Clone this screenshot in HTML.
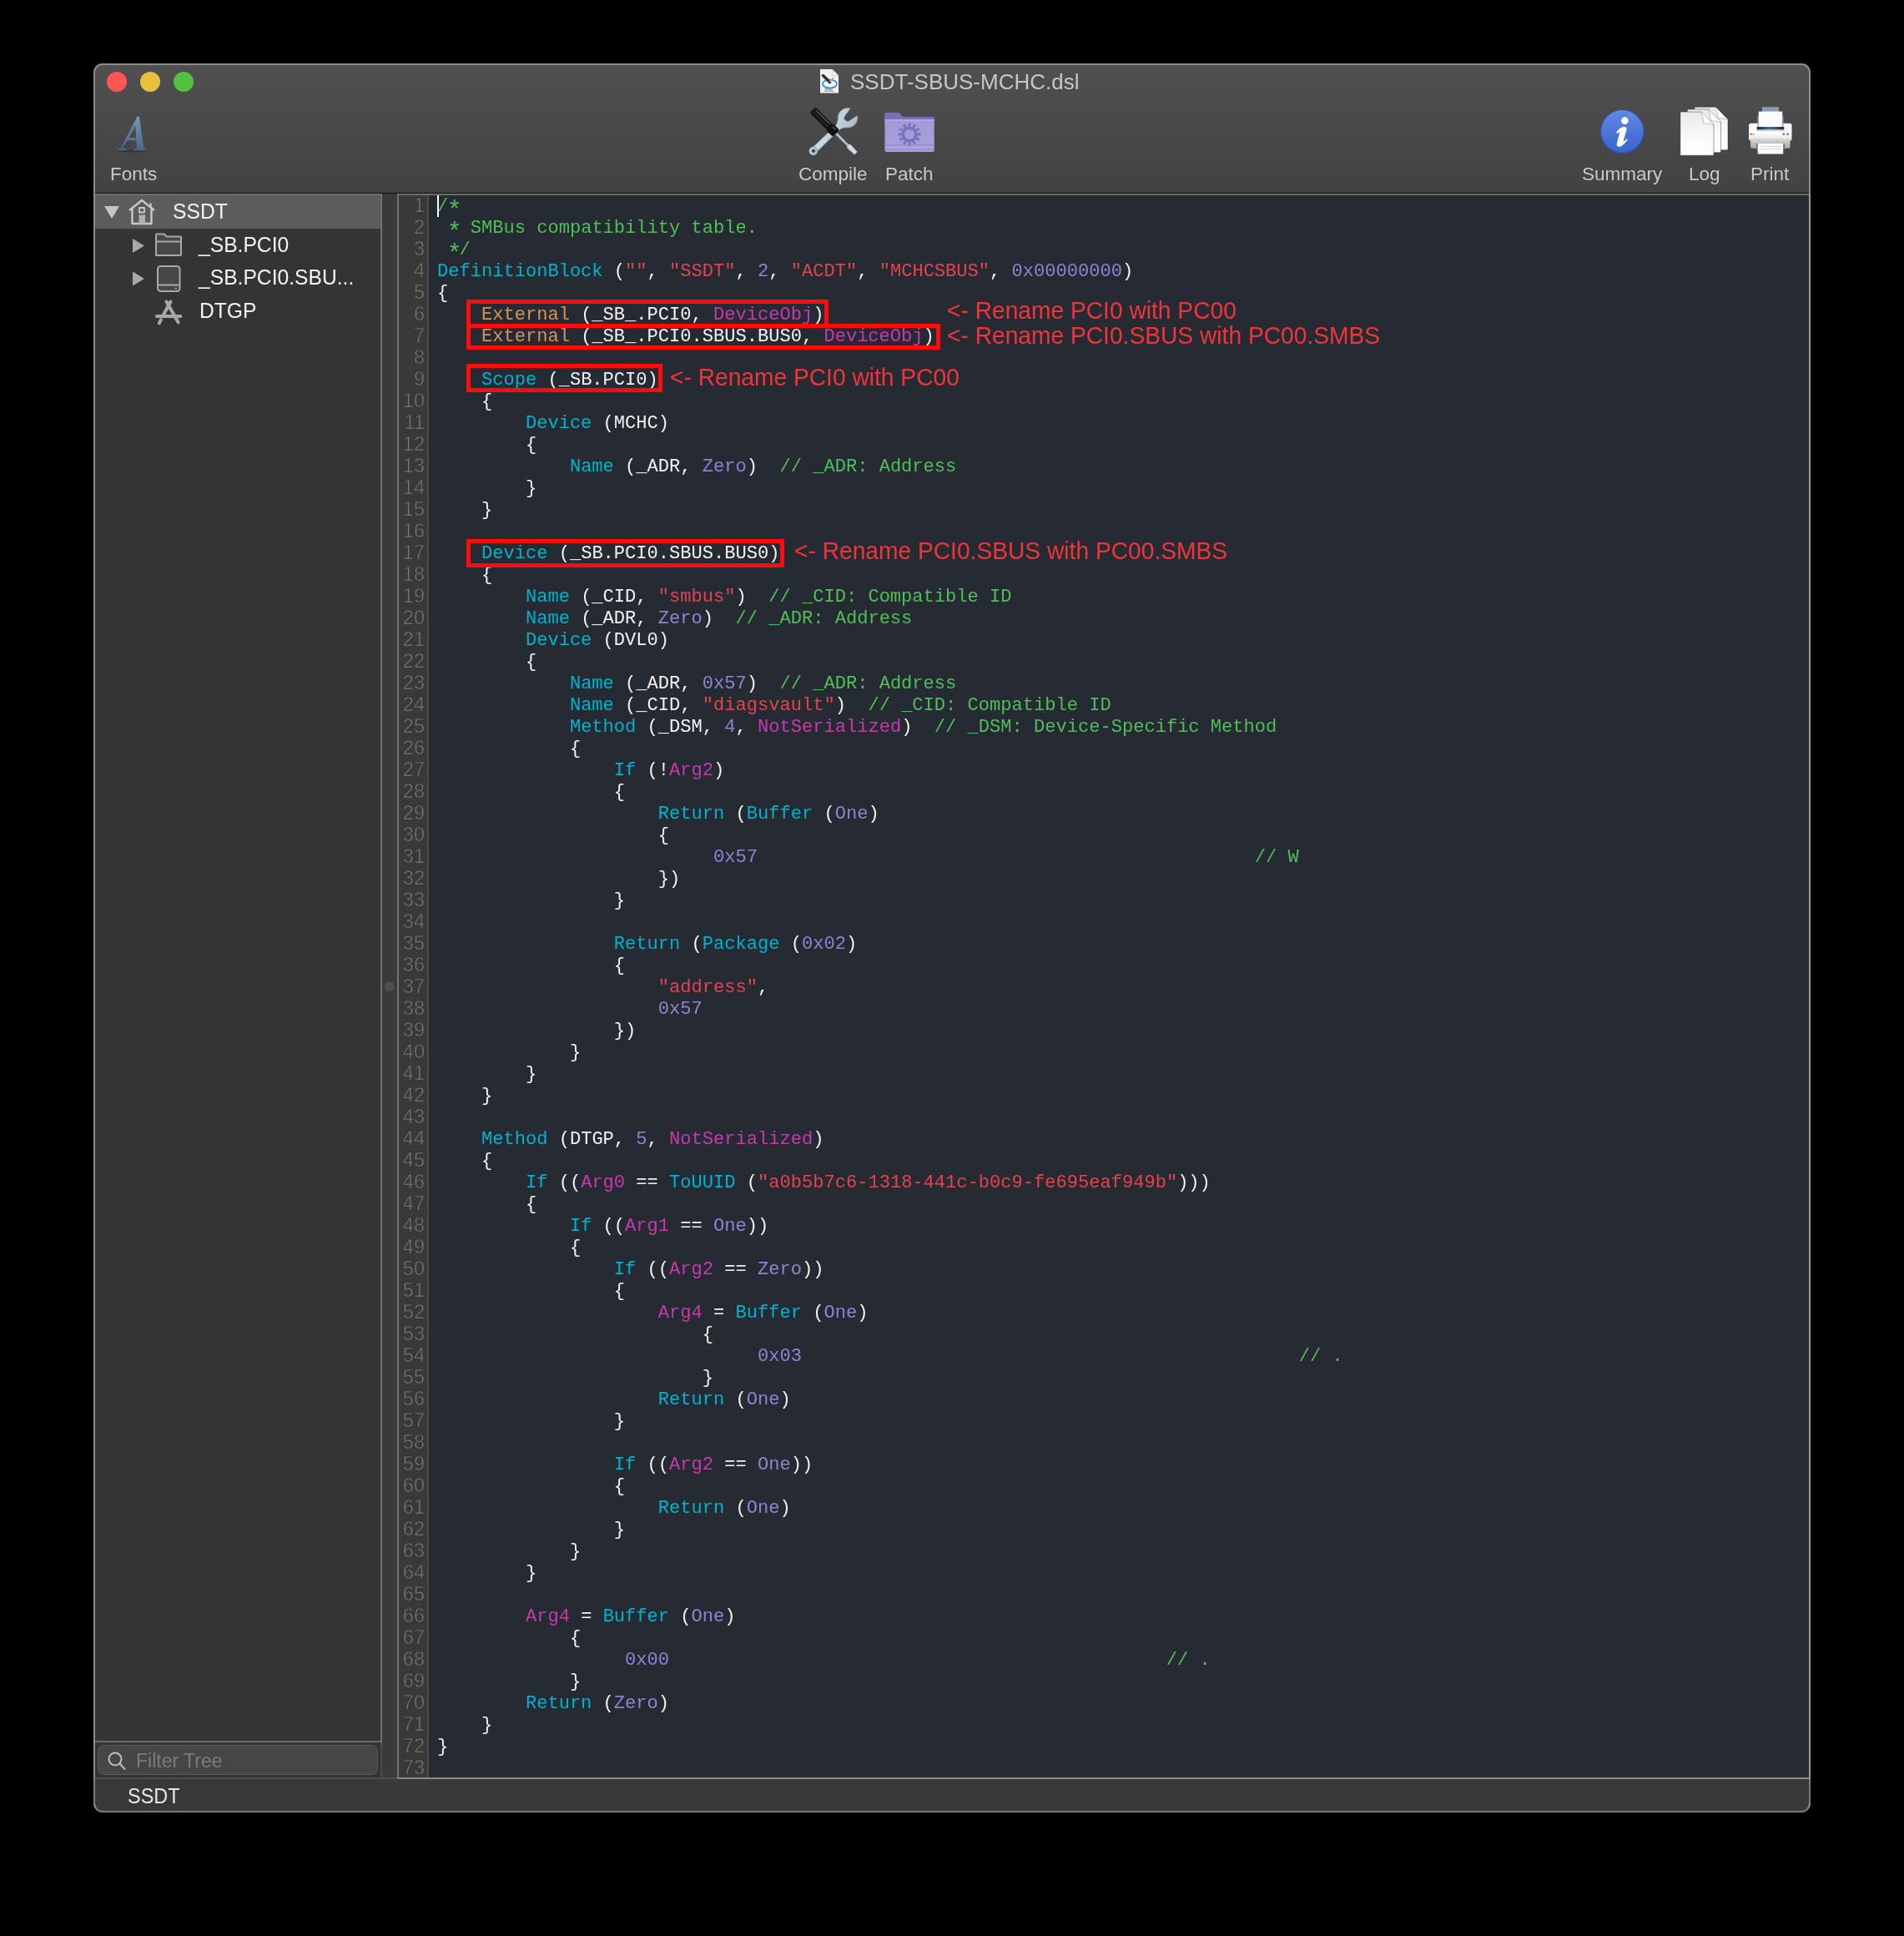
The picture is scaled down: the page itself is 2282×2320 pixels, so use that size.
<!DOCTYPE html>
<html><head><meta charset="utf-8">
<style>
*{margin:0;padding:0;box-sizing:border-box}
html,body{width:2282px;height:2320px;background:#000;overflow:hidden}
body{position:relative;font-family:"Liberation Sans",sans-serif;-webkit-font-smoothing:antialiased}
#root{position:absolute;left:0;top:0;width:2282px;height:2320px;will-change:transform}
.abs{position:absolute}
#win{position:absolute;left:112px;top:76px;width:2058px;height:2096px;border-radius:11px;background:#393939;overflow:hidden}
#winborder{position:absolute;left:112px;top:76px;width:2058px;height:2096px;border-radius:11px;border:2px solid #8c8c8c;border-bottom-color:#7a7a7a;pointer-events:none}
#toolbar{position:absolute;left:0;top:0;width:2058px;height:155px;background:linear-gradient(#4f504f,#414241)}
#tbline{position:absolute;left:0;top:155px;width:2058px;height:1px;background:#111}
.tl{position:absolute;width:24px;height:24px;border-radius:50%;top:86px}
.tlab{position:absolute;top:194px;font-size:22.5px;color:#c9c9c9;white-space:nowrap;line-height:30px}
#title{position:absolute;left:1019px;top:81px;font-size:26px;color:#c6c6c6;white-space:nowrap;line-height:34px}
#sidebar{position:absolute;left:114px;top:232px;width:344px;height:1900px;background:#343434;border-top:2px solid #6d6d6d;border-right:2px solid #4a4a4a}
#sbr{position:absolute;left:456px;top:232px;width:2px;height:1856px;background:#727272}
#splitter{position:absolute;left:458px;top:232px;width:18px;height:1900px;background:#3a3a3a}
#editor{position:absolute;left:476px;top:232px;width:1694px;height:1900px;background:#262a33;border-left:2px solid #727272;border-top:2px solid #6d6d6d;border-right:2px solid #979797;border-bottom:2px solid #8a8a8a}
#gutter{position:absolute;left:478px;top:234px;width:34px;height:1896px;background:#393939}
#gsep{position:absolute;left:512px;top:234px;width:2px;height:1896px;background:#4b4b4b}
#nums{position:absolute;left:478px;top:233px;width:31px;text-align:right;font-size:23.5px;line-height:26px;color:#7c7c7c;-webkit-text-stroke:0.75px #393939}
#nums div{height:26px}
#code{position:absolute;left:524px;top:235px;font-family:"Liberation Mono",monospace;font-size:22.07px;line-height:26px;color:#f2f2f2;white-space:pre}
#code .l{height:26px}
.ast{display:inline-block;transform:translate(1px,6px) scale(1.35)}
.c{color:#4fbf58}.k{color:#00b3cf}.s{color:#e5434d}.n{color:#8c85d2}.m{color:#c63aae}.e{color:#d6935e}
#caret{position:absolute;left:524px;top:234px;width:2px;height:26px;background:#fff}
.box{position:absolute;border:5px solid #fe0b0b}
.ann{position:absolute;color:#f0353a;font-size:29.5px;white-space:nowrap;line-height:36px;transform:scaleX(0.955);transform-origin:0 0}
#status{position:absolute;left:114px;top:2132px;width:2054px;height:38px;background:#393939;border-radius:0 0 9px 9px}
#sbline{position:absolute;left:114px;top:2130px;width:362px;height:2px;background:#4e4e4e}
.srow{position:absolute;left:114px;width:342px;height:40px}
.stext{position:absolute;font-size:26.5px;color:#f2f2f2;white-space:nowrap;line-height:34px;transform:scaleX(0.93);transform-origin:0 0}
#filter{position:absolute;left:117px;top:2091px;width:336px;height:36px;border-radius:8px;background:#464646;border:1px solid #5a5a5a}
</style></head><body><div id="root">
<div id="win"></div>
<div class="abs" style="left:112px;top:76px;width:2058px;height:156px;border-radius:11px 11px 0 0;overflow:hidden">
 <div id="toolbar"></div><div id="tbline"></div>
</div>
<div class="tl" style="left:128px;background:#fe5652"></div>
<div class="tl" style="left:168px;background:#e7c03e"></div>
<div class="tl" style="left:208px;background:#51c13e"></div>
<div id="title">SSDT-SBUS-MCHC.dsl</div>
<div class="tlab" style="left:132px">Fonts</div>
<div class="tlab" style="left:957px">Compile</div>
<div class="tlab" style="left:1061px">Patch</div>
<div class="tlab" style="left:1896px">Summary</div>
<div class="tlab" style="left:2024px">Log</div>
<div class="tlab" style="left:2098px">Print</div>

<div id="sidebar"></div><div id="sbr"></div>
<div class="srow" style="top:234px;background:#5c5c5c"></div>
<div class="stext" style="left:207px;top:236px">SSDT</div>
<div class="stext" style="left:238px;top:276px">_SB.PCI0</div>
<div class="stext" style="left:238px;top:315px">_SB.PCI0.SBU...</div>
<div class="stext" style="left:239px;top:355px">DTGP</div>
<div id="filter"></div>
<div class="abs" style="left:114px;top:2086px;width:342px;height:2px;background:#6a6a6a"></div>
<div class="abs" style="left:163px;top:2094px;font-size:23px;color:#7b7b7b;line-height:32px">Filter Tree</div>
<div id="splitter"></div>
<div class="abs" style="left:461px;top:1176px;width:12px;height:12px;border-radius:50%;background:#4f4f4f"></div>
<div id="editor"></div>
<div id="gutter"></div><div id="gsep"></div>
<div id="nums"><div>1</div><div>2</div><div>3</div><div>4</div><div>5</div><div>6</div><div>7</div><div>8</div><div>9</div><div>10</div><div>11</div><div>12</div><div>13</div><div>14</div><div>15</div><div>16</div><div>17</div><div>18</div><div>19</div><div>20</div><div>21</div><div>22</div><div>23</div><div>24</div><div>25</div><div>26</div><div>27</div><div>28</div><div>29</div><div>30</div><div>31</div><div>32</div><div>33</div><div>34</div><div>35</div><div>36</div><div>37</div><div>38</div><div>39</div><div>40</div><div>41</div><div>42</div><div>43</div><div>44</div><div>45</div><div>46</div><div>47</div><div>48</div><div>49</div><div>50</div><div>51</div><div>52</div><div>53</div><div>54</div><div>55</div><div>56</div><div>57</div><div>58</div><div>59</div><div>60</div><div>61</div><div>62</div><div>63</div><div>64</div><div>65</div><div>66</div><div>67</div><div>68</div><div>69</div><div>70</div><div>71</div><div>72</div><div>73</div></div>
<div id="code"><div class="l"><span class="c">/<span class="ast">*</span></span></div><div class="l"><span class="c"> <span class="ast">*</span> SMBus compatibility table.</span></div><div class="l"><span class="c"> <span class="ast">*</span>/</span></div><div class="l"><span class="k">DefinitionBlock</span> (<span class="s">&quot;&quot;</span>, <span class="s">&quot;SSDT&quot;</span>, <span class="n">2</span>, <span class="s">&quot;ACDT&quot;</span>, <span class="s">&quot;MCHCSBUS&quot;</span>, <span class="n">0x00000000</span>)</div><div class="l">{</div><div class="l">    <span class="e">External</span> (_SB_.PCI0, <span class="m">DeviceObj</span>)</div><div class="l">    <span class="e">External</span> (_SB_.PCI0.SBUS.BUS0, <span class="m">DeviceObj</span>)</div><div class="l">&#8203;</div><div class="l">    <span class="k">Scope</span> (_SB.PCI0)</div><div class="l">    {</div><div class="l">        <span class="k">Device</span> (MCHC)</div><div class="l">        {</div><div class="l">            <span class="k">Name</span> (_ADR, <span class="n">Zero</span>)  <span class="c">// _ADR: Address</span></div><div class="l">        }</div><div class="l">    }</div><div class="l">&#8203;</div><div class="l">    <span class="k">Device</span> (_SB.PCI0.SBUS.BUS0)</div><div class="l">    {</div><div class="l">        <span class="k">Name</span> (_CID, <span class="s">&quot;smbus&quot;</span>)  <span class="c">// _CID: Compatible ID</span></div><div class="l">        <span class="k">Name</span> (_ADR, <span class="n">Zero</span>)  <span class="c">// _ADR: Address</span></div><div class="l">        <span class="k">Device</span> (DVL0)</div><div class="l">        {</div><div class="l">            <span class="k">Name</span> (_ADR, <span class="n">0x57</span>)  <span class="c">// _ADR: Address</span></div><div class="l">            <span class="k">Name</span> (_CID, <span class="s">&quot;diagsvault&quot;</span>)  <span class="c">// _CID: Compatible ID</span></div><div class="l">            <span class="k">Method</span> (_DSM, <span class="n">4</span>, <span class="m">NotSerialized</span>)  <span class="c">// _DSM: Device-Specific Method</span></div><div class="l">            {</div><div class="l">                <span class="k">If</span> (!<span class="m">Arg2</span>)</div><div class="l">                {</div><div class="l">                    <span class="k">Return</span> (<span class="k">Buffer</span> (<span class="n">One</span>)</div><div class="l">                    {</div><div class="l">                         <span class="n">0x57</span>                                             <span class="c">// W</span></div><div class="l">                    })</div><div class="l">                }</div><div class="l">&#8203;</div><div class="l">                <span class="k">Return</span> (<span class="k">Package</span> (<span class="n">0x02</span>)</div><div class="l">                {</div><div class="l">                    <span class="s">&quot;address&quot;</span>,</div><div class="l">                    <span class="n">0x57</span></div><div class="l">                })</div><div class="l">            }</div><div class="l">        }</div><div class="l">    }</div><div class="l">&#8203;</div><div class="l">    <span class="k">Method</span> (DTGP, <span class="n">5</span>, <span class="m">NotSerialized</span>)</div><div class="l">    {</div><div class="l">        <span class="k">If</span> ((<span class="m">Arg0</span> == <span class="k">ToUUID</span> (<span class="s">&quot;a0b5b7c6-1318-441c-b0c9-fe695eaf949b&quot;</span>)))</div><div class="l">        {</div><div class="l">            <span class="k">If</span> ((<span class="m">Arg1</span> == <span class="n">One</span>))</div><div class="l">            {</div><div class="l">                <span class="k">If</span> ((<span class="m">Arg2</span> == <span class="n">Zero</span>))</div><div class="l">                {</div><div class="l">                    <span class="m">Arg4</span> = <span class="k">Buffer</span> (<span class="n">One</span>)</div><div class="l">                        {</div><div class="l">                             <span class="n">0x03</span>                                             <span class="c">// .</span></div><div class="l">                        }</div><div class="l">                    <span class="k">Return</span> (<span class="n">One</span>)</div><div class="l">                }</div><div class="l">&#8203;</div><div class="l">                <span class="k">If</span> ((<span class="m">Arg2</span> == <span class="n">One</span>))</div><div class="l">                {</div><div class="l">                    <span class="k">Return</span> (<span class="n">One</span>)</div><div class="l">                }</div><div class="l">            }</div><div class="l">        }</div><div class="l">&#8203;</div><div class="l">        <span class="m">Arg4</span> = <span class="k">Buffer</span> (<span class="n">One</span>)</div><div class="l">            {</div><div class="l">                 <span class="n">0x00</span>                                             <span class="c">// .</span></div><div class="l">            }</div><div class="l">        <span class="k">Return</span> (<span class="n">Zero</span>)</div><div class="l">    }</div><div class="l">}</div><div class="l">&#8203;</div></div>
<div id="caret"></div>

<div class="box" style="left:559px;top:359px;width:434px;height:34px"></div>
<div class="box" style="left:559px;top:388px;width:568px;height:31px"></div>
<div class="box" style="left:559px;top:436px;width:235px;height:34px"></div>
<div class="box" style="left:559px;top:646px;width:381px;height:34px"></div>
<div class="ann" style="left:1135px;top:354px">&lt;- Rename PCI0 with PC00</div>
<div class="ann" style="left:1135px;top:384px">&lt;- Rename PCI0.SBUS with PC00.SMBS</div>
<div class="ann" style="left:803px;top:434px">&lt;- Rename PCI0 with PC00</div>
<div class="ann" style="left:952px;top:642px">&lt;- Rename PCI0.SBUS with PC00.SMBS</div>

<div id="sbline"></div>
<div id="status"></div>
<div class="abs" style="left:153px;top:2135px;font-size:25.5px;color:#e6e6e6;line-height:34px;transform:scaleX(0.92);transform-origin:0 0">SSDT</div>
<svg class="abs" style="left:0;top:0" width="2282" height="2320" viewBox="0 0 2282 2320">
<defs>
 <linearGradient id="gA" x1="0" y1="0" x2="0" y2="1"><stop offset="0" stop-color="#7698b6"/><stop offset="1" stop-color="#44688a"/></linearGradient>
 <linearGradient id="gBlue" x1="0" y1="0" x2="0" y2="1"><stop offset="0" stop-color="#6288e2"/><stop offset="1" stop-color="#3a64cf"/></linearGradient>
 <linearGradient id="gPage" x1="0" y1="0" x2="0" y2="1"><stop offset="0" stop-color="#e9e9e9"/><stop offset="0.6" stop-color="#fafafa"/><stop offset="1" stop-color="#ffffff"/></linearGradient>
 <linearGradient id="gPr" x1="0" y1="0" x2="0" y2="1"><stop offset="0" stop-color="#fafafa"/><stop offset="0.75" stop-color="#e6e6e6"/><stop offset="1" stop-color="#b9b9b9"/></linearGradient>
 <linearGradient id="gWr" x1="0" y1="0" x2="1" y2="1"><stop offset="0" stop-color="#dbe8ef"/><stop offset="1" stop-color="#a9b9c2"/></linearGradient>
 <linearGradient id="gFold" x1="0" y1="0" x2="0" y2="1"><stop offset="0" stop-color="#a29ad6"/><stop offset="1" stop-color="#a7a1de"/></linearGradient>
 <linearGradient id="gPr1" x1="0" y1="0" x2="0" y2="1"><stop offset="0" stop-color="#f4f4f4"/><stop offset="0.5" stop-color="#ffffff"/><stop offset="1" stop-color="#e2e2e2"/></linearGradient>
 <linearGradient id="gPr2" x1="0" y1="0" x2="0" y2="1"><stop offset="0" stop-color="#d9d9d9"/><stop offset="1" stop-color="#a8a8a8"/></linearGradient>
 <linearGradient id="gSlot" x1="0" y1="0" x2="1" y2="0"><stop offset="0" stop-color="#1c2a3e"/><stop offset="0.5" stop-color="#4f6d92"/><stop offset="1" stop-color="#1c2a3e"/></linearGradient>
</defs>
<!-- title doc icon -->
<g>
 <path d="M983 83 H997.6 L1005 90.5 V111.4 H983 Z" fill="#f1f1f1"/>
 <path d="M997.6 83 V90.5 H1005 Z" fill="#ffffff" stroke="#b0b0b0" stroke-width="0.6"/>
 <ellipse cx="994.5" cy="100.5" rx="8.5" ry="5" fill="none" stroke="#2a86d0" stroke-width="1.6"/>
 <path d="M986.5 90.5 L994.5 98.5" stroke="#303030" stroke-width="3.5" stroke-linecap="round"/>
 <path d="M994 98 L999.5 93" stroke="#aaa" stroke-width="1.5"/>
 <text x="994" y="109.5" font-family="Liberation Sans" font-size="5.5" font-weight="bold" fill="#777" text-anchor="middle">DSL</text>
</g>
<!-- Fonts A -->
<ellipse cx="158.5" cy="180.8" rx="18" ry="1.6" fill="#2a2a2a" opacity="0.6"/>
<path fill-rule="evenodd" fill="url(#gA)" d="M164.6 139.4 L166.8 139.4 L172.5 177.6 Q173.2 178.4 175.2 178.6 L175.2 180.2 L159.8 180.2 L159.8 178.6 Q163.4 178.3 163.9 177.4 L163.3 168.3 L152.5 168.3 L147.2 176.6 Q146.6 178.3 151.9 178.6 L151.9 180.2 L141.7 180.2 L141.7 178.6 Q144.2 178.2 145.3 176.8 Z M162.3 150.6 L163.1 165.2 L154.4 165.2 Z"/>
<!-- Compile: wrench -->
<mask id="wm"><rect x="-20" y="-30" width="110" height="60" fill="#fff"/><path d="M57 -4 L72 -6.8 L72 6.8 L57 4 A4 4 0 0 1 57 -4 Z" fill="#000"/></mask>
<g transform="translate(974.9 180.9) rotate(-44)" mask="url(#wm)">
 <path d="M0 -3.6 L40 -3.4 Q44 -3.5 47 -6.5 L49 -8.5 A11.8 11.8 0 1 1 49 8.5 L47 6.5 Q44 3.5 40 3.4 L0 3.6 Z" fill="url(#gWr)" stroke="#7f95a1" stroke-width="0.9"/>
 <circle cx="0" cy="0" r="5" fill="url(#gWr)" stroke="#7f95a1" stroke-width="0.9"/>
 <circle cx="0" cy="0" r="2.3" fill="#454545" stroke="#7f95a1" stroke-width="0.6"/>
 
</g>
<!-- Compile: screwdriver -->
<g transform="translate(974.6 132.4) rotate(45)">
 <path d="M39 -1.3 L60 -1.2 L60 1.2 L39 1.3 Z" fill="#b9c5cb" stroke="#8a9aa3" stroke-width="0.5"/>
 <path d="M59 -2.2 Q61 -2.8 63 -2.8 L72.5 -2.3 L72.5 2.3 L63 2.8 Q61 2.8 59 2.2 Z" fill="#d2dce0" stroke="#8a9aa3" stroke-width="0.6"/>
 <rect x="-1" y="-4.9" width="30" height="9.8" rx="2.2" fill="#141414"/>
 <rect x="2" y="-3.2" width="24" height="1.4" fill="#6a6a6a" opacity="0.8"/>
 <rect x="2" y="0.8" width="24" height="1" fill="#3a3a3a" opacity="0.8"/>
 <rect x="27.5" y="-5.8" width="11.5" height="11.6" rx="2.8" fill="#101010"/>
 <rect x="29.5" y="-3.5" width="6" height="1.6" fill="#5a5a5a" opacity="0.8"/>
</g>
<!-- Patch folder -->
<g>
 <path d="M1060 137 Q1060 135 1062 135 H1078 L1082 140 H1118 Q1120 140 1120 142 V150 H1060 Z" fill="#786fb5"/>
 <rect x="1060.5" y="143" width="59.2" height="39" rx="2" fill="url(#gFold)"/>
 <rect x="1061" y="143.3" width="58" height="1.5" fill="#b3ade8"/>
 <rect x="1060.5" y="173.3" width="59.2" height="0.9" fill="#9089c9"/>
 <rect x="1060.5" y="176.5" width="59.2" height="0.9" fill="#b1abe4"/>
 <rect x="1060.5" y="178.8" width="59.2" height="0.9" fill="#8c85c4"/>
 <g transform="translate(1090 161)" fill="#7b72bb">
  <circle r="9.6"/>
  <rect x="-1.5" y="-13.8" width="3" height="5" rx="0.9"/>
  <rect x="-1.5" y="-13.8" width="3" height="5" rx="0.9" transform="rotate(30)"/><rect x="-1.5" y="-13.8" width="3" height="5" rx="0.9" transform="rotate(60)"/><rect x="-1.5" y="-13.8" width="3" height="5" rx="0.9" transform="rotate(90)"/>
  <rect x="-1.5" y="-13.8" width="3" height="5" rx="0.9" transform="rotate(120)"/><rect x="-1.5" y="-13.8" width="3" height="5" rx="0.9" transform="rotate(150)"/><rect x="-1.5" y="-13.8" width="3" height="5" rx="0.9" transform="rotate(180)"/>
  <rect x="-1.5" y="-13.8" width="3" height="5" rx="0.9" transform="rotate(210)"/><rect x="-1.5" y="-13.8" width="3" height="5" rx="0.9" transform="rotate(240)"/><rect x="-1.5" y="-13.8" width="3" height="5" rx="0.9" transform="rotate(270)"/>
  <rect x="-1.5" y="-13.8" width="3" height="5" rx="0.9" transform="rotate(300)"/><rect x="-1.5" y="-13.8" width="3" height="5" rx="0.9" transform="rotate(330)"/>
  <circle r="6" fill="#a29cd8"/>
 </g>
</g>
<!-- Summary -->
<circle cx="1944.3" cy="157.8" r="26.3" fill="#2552b8"/>
<circle cx="1944.3" cy="157.3" r="25.3" fill="url(#gBlue)"/>
<circle cx="1947.4" cy="144.6" r="4.3" fill="#fff"/>
<path d="M1937.3 158.6 C1939.5 155.3 1942.6 152 1946.6 152 C1949.2 152 1950 153.6 1949.4 156 L1945.4 169.8 C1946.7 169.3 1948.3 167.8 1949.9 166.3 L1950.7 167.4 C1947.2 172 1943.7 175.8 1940.6 175.8 C1938 175.8 1937.3 173.9 1938 171.4 L1941.4 158 C1940.4 158.6 1939.2 159.6 1938.3 160.3 Z" fill="#fff"/>
<!-- Log -->
<g>
<path d="M2031 128.2 H2056.5 L2071 143.2 V179.7 H2031 Z" fill="url(#gPage)" stroke="#1c1c1c" stroke-opacity="0.4" stroke-width="1"/>
 <path d="M2056.5 128.7 Q2058.5 134.2 2059.5 141.7 Q2065.5 141.2 2070.5 143.2" fill="none" stroke="#9a9a9a" stroke-width="1.6" opacity="0.7"/>
 <path d="M2056.5 128.7 Q2058.5 134.2 2059.5 141.7 Q2065.5 141.2 2070.5 143.2 Z" fill="#ffffff"/>
<path d="M2022.4 131 H2048.0 L2062.5 146 V182.8 H2022.4 Z" fill="url(#gPage)" stroke="#1c1c1c" stroke-opacity="0.4" stroke-width="1"/>
 <path d="M2048.0 131.5 Q2050.0 137 2051.0 144.5 Q2057.0 144 2062.0 146" fill="none" stroke="#9a9a9a" stroke-width="1.6" opacity="0.7"/>
 <path d="M2048.0 131.5 Q2050.0 137 2051.0 144.5 Q2057.0 144 2062.0 146 Z" fill="#ffffff"/>
<path d="M2013.9 134.1 H2039.5 L2054 149.1 V186.2 H2013.9 Z" fill="url(#gPage)" stroke="#1c1c1c" stroke-opacity="0.4" stroke-width="1"/>
 <path d="M2039.5 134.6 Q2041.5 140.1 2042.5 147.6 Q2048.5 147.1 2053.5 149.1" fill="none" stroke="#9a9a9a" stroke-width="1.6" opacity="0.7"/>
 <path d="M2039.5 134.6 Q2041.5 140.1 2042.5 147.6 Q2048.5 147.1 2053.5 149.1 Z" fill="#ffffff"/>
</g>
<!-- Print -->
<g>
 <rect x="2112" y="128.2" width="20" height="6" fill="#8a9ab2"/>
 <rect x="2096" y="147.8" width="51.5" height="21" rx="2.5" fill="url(#gPr1)"/>
 <rect x="2098" y="166" width="47.5" height="11.8" rx="2" fill="url(#gPr2)"/>
 <rect x="2107.7" y="133.6" width="28.5" height="18.5" fill="#fafafa"/>
 <rect x="2106.5" y="139" width="1.5" height="13" fill="#9aa6b8"/>
 <rect x="2135.8" y="139" width="1.5" height="13" fill="#9aa6b8"/>
 <rect x="2105.7" y="152" width="32.5" height="3.6" fill="url(#gSlot)"/>
 <rect x="2105" y="155.6" width="34" height="1.8" fill="#d8d8d8"/>
 <rect x="2097.5" y="159.8" width="2.5" height="1.8" fill="#e8452c"/>
 <rect x="2100.6" y="159.8" width="2" height="1.8" fill="#f2a033"/>
 <circle cx="2137.8" cy="160.7" r="1.3" fill="#666"/><circle cx="2142.6" cy="160.7" r="1.3" fill="#666"/>
 <rect x="2105" y="172" width="34" height="8" fill="#707070"/>
 <rect x="2106.7" y="172" width="30.5" height="12.5" fill="#fbfbfb"/>
 <path d="M2110 175.5 H2134 M2110 178.5 H2134" stroke="#cfcfcf" stroke-width="0.9"/>
</g>
<!-- sidebar icons -->
<path d="M125 247 H143 L134 262 Z" fill="#c5c5c5"/>
<path d="M159 286 L173 294.5 L159 303 Z" fill="#a9a9a9"/>
<path d="M159 325.5 L173 334 L159 342.5 Z" fill="#a9a9a9"/>
<g fill="none" stroke="#c9c9c9" stroke-width="2.4" stroke-linejoin="round">
 <path d="M155 252 L170 240 L185 252"/>
 <path d="M180.5 243.5 V248"/>
 <path d="M158.5 250 V268 H181.5 V250"/>
 <rect x="167" y="249" width="6" height="5.5" stroke-width="1.8"/>
</g>
<rect x="166.5" y="257.5" width="7.5" height="11" fill="#b0b0b0"/>
<g fill="none" stroke="#a9a9a9" stroke-width="2">
 <path d="M187 306 V281.5 Q187 280.5 188 280.5 H197 L199.5 283.5 H216 Q217 283.5 217 284.5 V305 Q217 306 216 306 Z" fill="#474747"/>
 <path d="M187 289.5 H217"/>
</g>
<g fill="none" stroke="#a9a9a9" stroke-width="2">
 <rect x="189" y="319" width="26.5" height="30" rx="3.5" fill="#474747"/>
 <path d="M189 341.5 H215.5"/>
</g>
<circle cx="210.8" cy="345.6" r="1.1" fill="#a9a9a9"/>
<g stroke="#a8a8a8" stroke-width="4" stroke-linecap="round">
 <path d="M204.5 361.5 L195.8 377.5"/>
 <path d="M199.5 361.5 L213.6 386.3"/>
 <path d="M188 379 H216.4"/>
 <path d="M192.8 383.3 L190.8 387.3"/>
</g>
<!-- search -->
<g fill="none" stroke="#bdbdbd" stroke-width="2">
 <circle cx="138" cy="2108" r="7.5"/>
 <path d="M143.5 2113.5 L150 2120.5"/>
</g>
</svg>

<div id="winborder"></div>
<div class="abs" style="left:2168px;top:232px;width:2px;height:1900px;background:#9a9a9a"></div>
<div class="abs" style="left:2168px;top:2132px;width:2px;height:28px;background:#787878"></div>
<div class="abs" style="left:112px;top:2132px;width:2px;height:28px;background:#7a7a7a"></div>
</div></body></html>
